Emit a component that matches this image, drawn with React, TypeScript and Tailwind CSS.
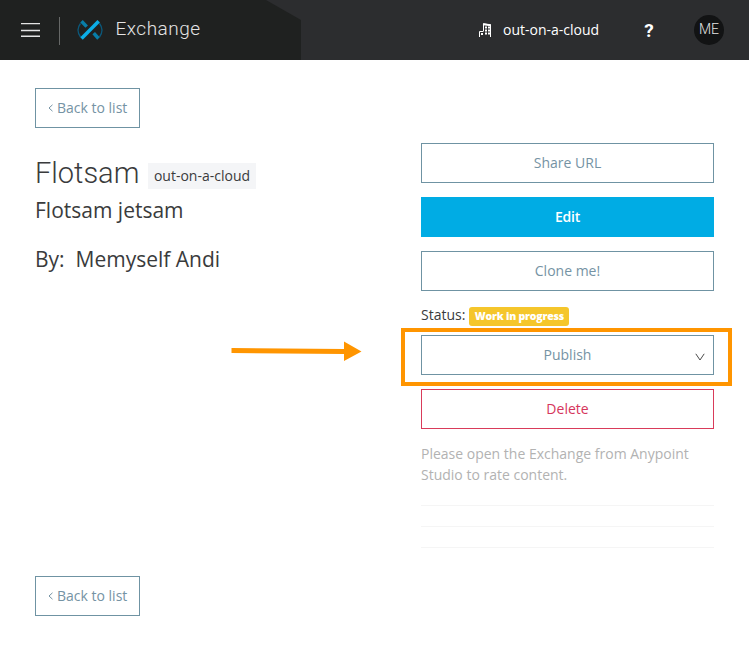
import React from "react";

const OUTLINE = "flex h-10 w-full items-center justify-center border border-[#6f93a3] bg-white pb-0.5 text-[#7593a4]";

function BackButton() {
  return (
    <button className="flex h-10 w-[105px] items-center border border-[#6f93a3] bg-white pb-0.5 pl-3 text-[#7593a4]">
      <svg className="mr-1 mt-0.5 h-2 w-[5px] shrink-0" viewBox="0 0 5 8" fill="none" stroke="currentColor" strokeWidth="1">
        <path d="M4.5 0.8 L1 4 L4.5 7.2" />
      </svg>
      <span className="whitespace-nowrap">Back to list</span>
    </button>
  );
}

function Header() {
  return (
    <header className="relative flex h-[60px] items-center bg-[#2c2d2f] text-white">
      <svg className="absolute left-0 top-0 h-[60px] w-[301px]" viewBox="0 0 301 60">
        <path d="M0 0H266L301 20V60H0Z" fill="#1f2120" />
      </svg>
      <div className="relative flex h-full w-[301px] items-center">
        <svg className="ml-[21px] h-4 w-[19px]" viewBox="0 0 19 16" fill="none" stroke="#e4e4e4" strokeWidth="1.4">
          <path d="M0 1.6H19M0 8.5H19M0 14.2H19" />
        </svg>
        <div className="ml-[19px] mt-px h-7 w-px bg-[#666867]" />
        <svg className="ml-[17px] h-[22px] w-[26px]" viewBox="0 0 26 22" fill="none">
          <path d="M3.5 4.5Q-1.5 11 3.5 18M22.5 4.5Q27.5 11 22.5 18" stroke="#0b587a" strokeWidth="1.3" />
          <path d="M4.5 2.2L9.7 7.6M16.7 14.2L21.5 19.5" stroke="#087da7" strokeWidth="3.5" />
          <path d="M4.5 19.5L21.7 2.2" stroke="#0cade6" strokeWidth="3.5" />
        </svg>
        <span className="ml-[12.5px] mb-1 font-['Roboto','Liberation_Sans',sans-serif] text-[19px] font-light tracking-[0.5px] text-[#e4e4e4]">Exchange</span>
      </div>
      <svg className="ml-[178px] h-[14px] w-[12px]" viewBox="0 0 12 14" fill="none" stroke="#fff">
        <path d="M.5 14V8.5H4.5M4.5 8V.8L11.5 2V14" />
        <path d="M4 1.3L12 2.3" strokeWidth="2" />
        <path d="M6 4.5H8M9 4.5H11M6 7.5H8M9 7.5H11M2 11H4M6 10.5H8M9 10.5H11" strokeWidth="1.8" />
      </svg>
      <span className="ml-3 whitespace-nowrap pb-0.5">out-on-a-cloud</span>
      <span className="ml-[45px] font-['Roboto','Liberation_Sans',sans-serif] text-[19px] font-bold">?</span>
      <div className="ml-auto mr-[25px] flex h-[30px] w-[30px] items-center justify-center rounded-full bg-[#121314] pb-0.5 font-['Roboto','Liberation_Sans',sans-serif] text-[14px] font-light text-[#e4e4e4]">ME</div>
    </header>
  );
}

export default function App() {
  return (
    <div className="h-[649px] w-[749px] overflow-hidden bg-white font-['Open_Sans','Liberation_Sans',sans-serif] text-[14px] leading-[21px] text-[#3a3b3c]">
      <Header />
      <main className="px-[35px] pt-7">
        <BackButton />
        <div className="flex h-[448px] justify-between">
          <section className="w-[340px] pt-[26px]">
            <div className="flex h-[38px] items-center">
              <h1 className="w-[104px] whitespace-nowrap font-['Roboto','Liberation_Sans',sans-serif] text-[29px] font-light leading-[38px]">Flotsam</h1>
              <span className="ml-[9px] mt-1.5 flex h-[26px] w-[108px] items-center justify-center whitespace-nowrap bg-[#f4f5f7] pb-0.5">out-on-a-cloud</span>
            </div>
            <p className="mt-0.5 text-[21px] leading-[32px]">Flotsam jetsam</p>
            <p className="mt-[17px] whitespace-pre text-[21px] leading-[32px]">By:  Memyself Andi</p>
            <svg className="ml-[196px] mt-[66px] h-5 w-[131px]" viewBox="0 0 131 20" fill="#ff9500">
              <path d="M.5 7L113 8V0.5L130.5 10.5L113 20V13L.5 12Z" />
            </svg>
          </section>
          <aside className="flex w-[293px] flex-col pt-[15px]">
            <button className={OUTLINE}>Share URL</button>
            <button className="mt-3.5 flex h-10 w-full items-center justify-center bg-[#00ace4] pb-0.5 font-semibold tracking-[-0.2px] text-white">Edit</button>
            <button className={OUTLINE + " mt-3.5"}>Clone me!</button>
            <div className="mt-[13px] flex h-[21px] items-center">
              <span className="whitespace-nowrap">Status:</span>
              <span className="ml-1 mt-[3px] flex h-[19px] w-[100px] items-center justify-center whitespace-nowrap rounded-[3px] bg-[#f5c62b] text-[10.5px] font-extrabold tracking-[-0.2px] text-white">Work in progress</span>
            </div>
            <div className="relative mt-[10px]">
              <button className={OUTLINE}>Publish</button>
              <svg className="absolute right-[9px] top-[18px] h-2 w-[10px]" viewBox="0 0 10 8" fill="none" stroke="#4b4b4b">
                <path d="M.8 .8L5 7L9.2 .8" />
              </svg>
              <div className="pointer-events-none absolute -left-5 -top-[7px] h-[58px] w-[331px] border-4 border-[#ff9500]" />
            </div>
            <button className="mt-3.5 flex h-10 w-full items-center justify-center border border-[#d93b5a] bg-white pb-0.5 text-[#d6355c]">Delete</button>
            <p className="mt-3.5 whitespace-nowrap text-[#b2b2b2]">Please open the Exchange from Anypoint<br />Studio to rate content.</p>
            <div className="mt-5 h-px bg-[#f5f5f5]" />
            <div className="mt-5 h-px bg-[#f5f5f5]" />
            <div className="mt-5 h-px bg-[#f5f5f5]" />
          </aside>
        </div>
        <BackButton />
      </main>
    </div>
  );
}
